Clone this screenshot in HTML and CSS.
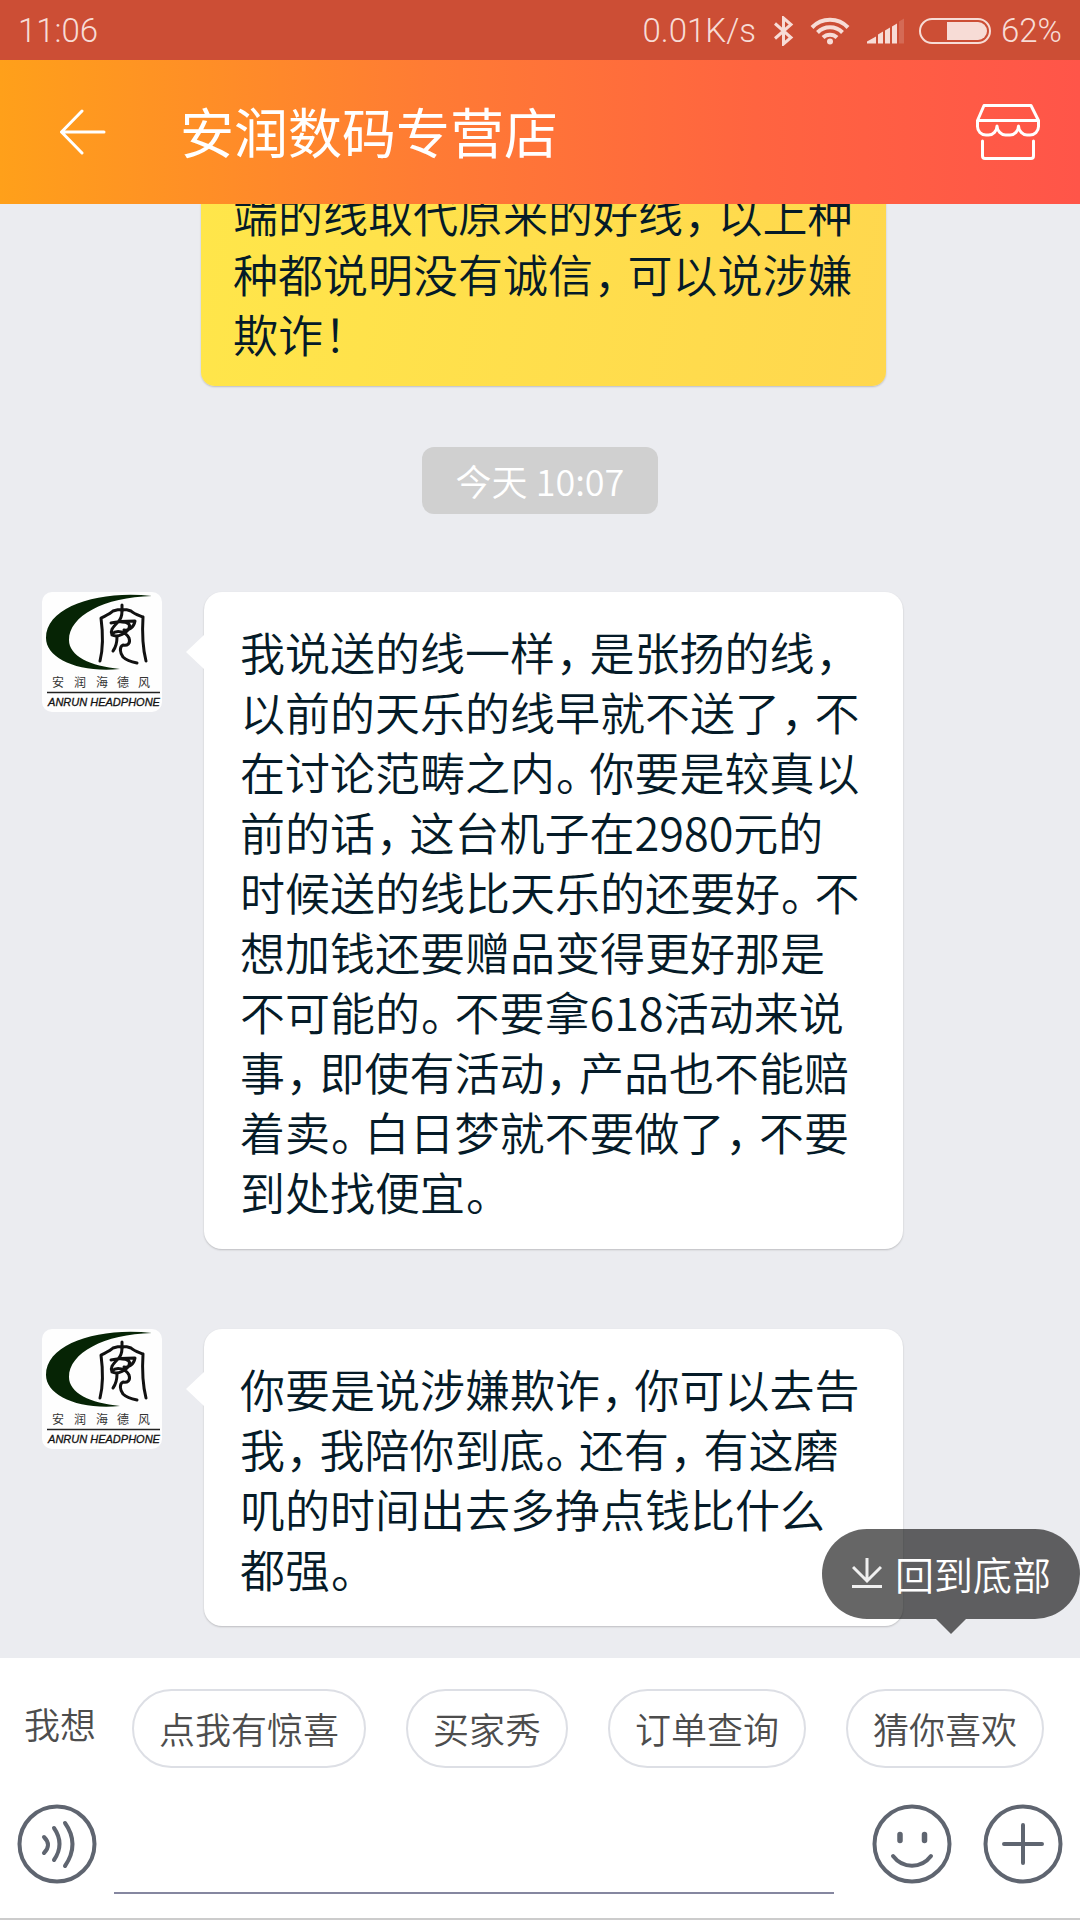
FILE: index.html
```html
<!DOCTYPE html>
<html lang="zh-CN">
<head>
<meta charset="utf-8">
<meta name="viewport" content="width=device-width, initial-scale=1">
<title>安润数码专营店</title>
<link rel="stylesheet" href="styles.css">
</head>
<body>
<svg class="defs" aria-hidden="true">
  <symbol id="shop-logo" viewBox="0 0 120 120">
    <rect width="120" height="120" fill="#fefefe"/>
    <path d="M110 4C58-2 4 14 4 46c0 20 31 35 74 31C48 74 27 64 27 48 27 24 62 5 110 4z" fill="#062405"/>
    <g fill="none" stroke="#111" stroke-width="3" stroke-linecap="round" stroke-linejoin="round">
      <path d="M80 13v6M58 69c3-12 3-28 1-43 6-3 9-4 12-7 7-2 12-2 18 0 3 3 7 4 12 6-1 16 0 32 3 44"/>
      <path d="M80 19c0 5-1 8-4 11-6 6-8 9-6 13 6 3 15-2 17-7 2-4-2-6-7-6M69 31c8-2 16-2 24-2-1 6-6 10-11 9M70 42c5-5 14-2 17 4 2 6-2 8-6 7-4 2-3 8 0 12 3 3 9 5 14 6"/>
      <path d="M75 45c0 5-1 10-4 14"/>
    </g>
    <path d="M5 100.500h113" stroke="#222" stroke-width="1.500"/>
  </symbol>
</svg>

<div class="status">
  <span>11:06</span>
  <div class="status-right">
    <span class="speed">0.01K/s</span>
    <svg class="bluetooth" width="20" height="30" viewBox="0 0 20 30" fill="none" stroke="currentColor" stroke-width="3"><path d="M1 7.500l16 14-7.500 6.500V2L17 8.500l-16 14"/></svg>
    <svg class="wifi" width="40" height="28" viewBox="0 0 40 28" fill="none" stroke="currentColor" stroke-width="4"><path d="M2 10.500a25 25 0 0 1 36 0M7.500 15.500a17.500 17.500 0 0 1 25 0M13 20.500a10 10 0 0 1 14 0"/><circle cx="20" cy="24.500" r="3" fill="currentColor" stroke="none"/></svg>
    <svg class="signal" width="38" height="26" viewBox="0 0 38 26" fill="currentColor"><path d="M0 25.500v-2l9-5v7zM11 25.500v-9l5-3v12zM18 25.500v-13l5-3v16zM25 25.500V8.500l5-3v20z"/><path opacity=".2" d="M32 25.500V3.500l5-3v25z"/></svg>
    <svg class="battery" width="72" height="26" viewBox="0 0 72 26"><rect x="1" y="1" width="70" height="24" rx="12" fill="none" stroke="currentColor" stroke-width="2"/><path d="M28 4h31a9 9 0 0 1 0 18H28z" fill="currentColor"/></svg>
    <span>62%</span>
  </div>
</div>

<header class="topbar">
  <button class="icon-btn" aria-label="返回"><svg width="46" height="46" viewBox="0 0 46 46" fill="none" stroke="#fff" stroke-width="3" stroke-linecap="round" stroke-linejoin="round"><path d="M44 23H2M22 2L1.500 23 22 44"/></svg></button>
  <h1>安润数码专营店</h1>
  <button class="icon-btn" aria-label="店铺"><svg width="64" height="56" viewBox="0 0 64 56" fill="none" stroke="#fff" stroke-width="3" stroke-linecap="round" stroke-linejoin="round"><path d="M8 1.500h47L62.500 16.500v6c0 5-4 8.500-8.500 8.500h-3c-4 0-8.500-4-8.500-9 0 5-4 9-8.500 9h-4.500c-4 0-8.500-4-8.500-9 0 5-4 9-8.500 9H10c-5 0-8.500-4-8.500-8.500v-6zM1.500 16.500h61M6.500 37v15c0 1.500 1 2.500 2.500 2.500h46c1.500 0 2.500-1 2.500-2.500V37"/></svg></button>
</header>

<main class="chat">
  <div class="msg msg-out">
    <p class="bubble">端的线取代原来的好线<span class="p">，</span>以上种种都说明没有诚信<span class="p">，</span>可以说涉嫌欺诈<span class="p">！</span></p>
  </div>
  <time class="stamp">今天 10:07</time>
  <div class="msg msg-in">
    <svg class="avatar" viewBox="0 0 120 120"><use href="#shop-logo"/><text class="logo-cn" y="95" x="10 32 54 75 96">安润海德风</text><text class="logo-en" x="62" y="114" text-anchor="middle">ANRUN HEADPHONE</text></svg>
    <p class="bubble">我说送的线一样<span class="p">，</span>是张扬的线<span class="p">，</span>以前的天乐的线早就不送了<span class="p">，</span>不在讨论范畴之内<span class="p">。</span>你要是较真以前的话<span class="p">，</span>这台机子在2980元的时候送的线比天乐的还要好<span class="p">。</span>不想加钱还要赠品变得更好那是不可能的<span class="p">。</span>不要拿618活动来说事<span class="p">，</span>即使有活动<span class="p">，</span>产品也不能赔着卖<span class="p">。</span>白日梦就不要做了<span class="p">，</span>不要到处找便宜<span class="p">。</span></p>
  </div>
  <div class="msg msg-in">
    <svg class="avatar" viewBox="0 0 120 120"><use href="#shop-logo"/><text class="logo-cn" y="95" x="10 32 54 75 96">安润海德风</text><text class="logo-en" x="62" y="114" text-anchor="middle">ANRUN HEADPHONE</text></svg>
    <p class="bubble">你要是说涉嫌欺诈<span class="p">，</span>你可以去告我<span class="p">，</span>我陪你到底<span class="p">。</span>还有<span class="p">，</span>有这磨叽的时间出去多挣点钱比什么都强<span class="p">。</span></p>
  </div>
  <button class="to-bottom"><svg width="30" height="30" viewBox="0 0 30 30" fill="none" stroke="#f0f0f0" stroke-width="3"><path d="M15 0v23M1 9l14 14L29 9M0 28.500h30"/></svg>回到底部</button>
</main>

<footer class="composer">
  <div class="quick">
    <span class="quick-label">我想</span>
    <button class="chip">点我有惊喜</button>
    <button class="chip">买家秀</button>
    <button class="chip">订单查询</button>
    <button class="chip">猜你喜欢</button>
  </div>
  <div class="entry">
    <button class="icon-btn" aria-label="语音"><svg width="80" height="80" viewBox="0 0 80 80" fill="none" stroke="currentColor" stroke-width="4" stroke-linecap="round"><circle cx="40" cy="40" r="37.500"/><path d="M27 33q8 8 0 16M37 24q11 16 0 32M48 19q15 21 0 43"/></svg></button>
    <input class="field" type="text" aria-label="输入消息">
    <button class="icon-btn" aria-label="表情"><svg width="80" height="80" viewBox="0 0 80 80" fill="none" stroke="currentColor" stroke-width="4" stroke-linecap="round"><circle cx="40" cy="40" r="37.500"/><path d="M21 52c10 13 28 13 38 0"/><path stroke-width="5.500" d="M28 30.500v6M52.500 30.500v6"/></svg></button>
    <button class="icon-btn" aria-label="更多"><svg width="80" height="80" viewBox="0 0 80 80" fill="none" stroke="currentColor" stroke-width="4" stroke-linecap="round"><circle cx="40" cy="40" r="37.500"/><path d="M40 21v38M21 40h38"/></svg></button>
  </div>
</footer>
</body>
</html>
```
FILE: styles.css
```css
* { box-sizing: border-box; }

body {
  margin: 0;
  height: 100vh;
  display: flex;
  flex-direction: column;
  font-family: "Noto Sans CJK SC", sans-serif;
  font-weight: 350;
  color: #051b28;
  background: #ebecf0;
}

button {
  font: inherit;
  color: inherit;
  background: none;
  border: 0;
  padding: 0;
}

svg { display: block; }
.defs { position: absolute; width: 0; height: 0; }
.icon-btn { flex: none; }

/* system status bar */
.status {
  flex: none;
  height: 60px;
  padding: 2px 18px 0;
  display: flex;
  align-items: center;
  justify-content: space-between;
  background: #cc4e35;
  color: #f7dcd6;
  font: 300 33px/58px Roboto, sans-serif;
}
.status-right { display: flex; align-items: center; }
.bluetooth { margin-left: 18px; }
.wifi { margin-left: 16px; }
.signal { margin-left: 17px; }
.battery { margin: 0 10px 0 14px; }

/* shop title bar */
.topbar {
  flex: none;
  height: 144px;
  padding: 0 40px 0 60px;
  display: flex;
  align-items: center;
  background: linear-gradient(90deg, #ffa01a, #ff7b34 40%, #ff6440 70%, #ff5549);
}
.topbar h1 {
  flex: 1;
  margin: 0 0 2px 74px;
  font-size: 54px;
  line-height: 72px;
  font-weight: 400;
  color: #fff;
}

/* conversation, anchored to its newest message */
.chat {
  position: relative;
  flex: 1;
  min-height: 0;
  overflow: hidden;
  display: flex;
  flex-direction: column;
  justify-content: flex-end;
  padding-bottom: 32px;
}
.msg { flex: none; display: flex; align-items: flex-start; }
.msg-in { padding: 0 177px 0 42px; gap: 42px; }
.msg-out { padding: 0 194px 0 201px; }
.msg-in + .msg-in { margin-top: 80px; }

.bubble {
  position: relative;
  flex: 1;
  margin: 0;
  padding: 30px 38px 27px 36px;
  font-size: 45px;
  line-height: 60px;
  border-radius: 18px;
  background: #fff;
  box-shadow: 0 1px 2px rgba(0, 0, 0, .2);
}
.msg-in .bubble::before {
  content: "";
  position: absolute;
  left: -18px;
  top: 43px;
  border: solid transparent;
  border-width: 17px 18px 17px 0;
  border-right-color: #fff;
}
.msg-out .bubble {
  padding: 30px 31px 22px 32px;
  border-radius: 14px;
  background: linear-gradient(100deg, #ffe64a, #ffd74e);
}
/* half-width marks, set with some air around them */
.p { font-feature-settings: "halt"; margin: 0 11px 0 1px; }

.avatar { flex: none; width: 120px; height: 120px; border-radius: 10px; }
.logo-cn { font-size: 12px; font-weight: 400; fill: #333; }
.logo-en { font: italic 400 11px "Liberation Sans", sans-serif; fill: #111; stroke: #111; stroke-width: .3px; }

.stamp {
  flex: none;
  align-self: center;
  margin: 61px 0 78px;
  padding: 0 34px;
  font-size: 36px;
  line-height: 67px;
  border-radius: 12px;
  background: #d0d0d0;
  color: #fff;
}

.to-bottom {
  position: absolute;
  right: 0;
  bottom: 39px;
  height: 90px;
  padding: 0 29px 2px 30px;
  display: flex;
  align-items: center;
  gap: 13px;
  border-radius: 45px;
  background: rgba(0, 0, 0, .6);
  color: #fff;
  font-size: 39px;
  line-height: 60px;
}
.to-bottom::after {
  content: "";
  position: absolute;
  left: 114px;
  top: 100%;
  border: solid transparent;
  border-width: 15px 15px 0;
  border-top-color: rgba(0, 0, 0, .6);
}

/* quick replies and message entry */
.composer {
  flex: none;
  background: #fff;
  border-bottom: 2px solid #ccc;
}
.quick {
  display: flex;
  gap: 40px;
  padding: 31px 36px 0 24px;
  font-size: 36px;
  color: #4d4d4d;
}
.quick-label { line-height: 68px; margin-right: -4px; }
.chip {
  height: 79px;
  padding: 0 25px 2px;
  border: 2px solid #dddfe5;
  border-radius: 40px;
}
.entry {
  display: flex;
  align-items: flex-start;
  padding: 36px 17px 24px;
  color: #5f6570;
}
.field {
  flex: 1;
  min-width: 0;
  height: 90px;
  margin: 0 38px 0 17px;
  padding: 0 8px;
  border: 0;
  border-bottom: 2px solid #8587a0;
  background: none;
  font: inherit;
  font-size: 45px;
  outline: 0;
}
.entry .icon-btn + .icon-btn { margin-left: 31px; }
```
